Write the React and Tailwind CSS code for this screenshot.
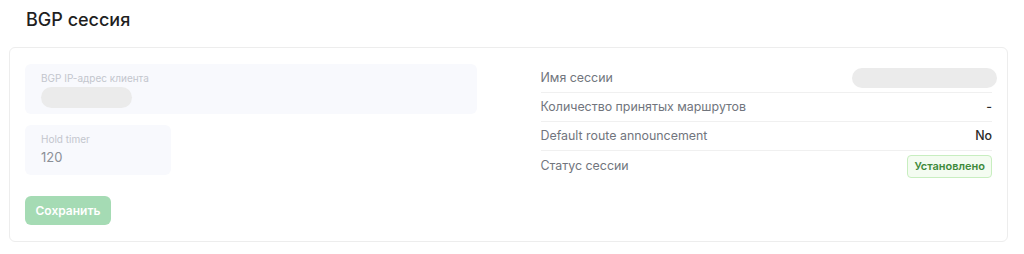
import React from "react";

const ROWS = [
  { label: "Имя сессии", value: "skeleton" },
  { label: "Количество принятых маршрутов", value: "-" },
  { label: "Default route announcement", value: "No" },
  { label: "Статус сессии", value: "badge" },
];

const Field = ({ label, children, className }) => (
  <div className={`rounded-md bg-[#f8f9fd] px-4 pt-[7px] ${className}`}>
    <div className="text-[10px] leading-[14px] text-[#c3c6cd]">{label}</div>
    {children}
  </div>
);

const App = () => {
  return (
    <div className="w-[1024px] h-[254px] bg-white font-['Inter','Liberation_Sans',sans-serif]">
      <h2 className="pl-[26px] pt-[9px] text-[18px] leading-[22px] font-medium text-[#1f1f1f]">
        BGP сессия
      </h2>

      <div className="mx-[9px] mt-[16px] w-[999px] rounded-md border border-[#ededed] px-[15px] pt-[16px] pb-[16px]">
        <div className="grid grid-cols-2 gap-16">
          <div className="flex flex-col">
            <Field label="BGP IP-адрес клиента" className="h-[50px]">
              <div className="mt-[2px] h-[21px] w-[91px] rounded-full bg-[#ebebeb]" />
            </Field>
            <Field label="Hold timer" className="mt-[11px] h-[50px] w-[146px]">
              <div className="mt-[3px] text-[13px] leading-[16px] text-[#8b8f97]">120</div>
            </Field>
            <button className="mt-[21px] h-[29px] w-[86px] rounded-md bg-[#a5dbb4] text-[12px] font-semibold text-white">
              Сохранить
            </button>
          </div>

          <div className="flex flex-col">
            {ROWS.map((row, i) => (
              <div
                key={row.label}
                className={`flex items-center justify-between ${
                  i < ROWS.length - 1 ? "h-[29px] border-b border-[#f0f0f0]" : "h-[30px]"
                }`}
              >
                <span className="text-[12.4px] text-[#71757d]">{row.label}</span>
                {row.value === "skeleton" ? (
                  <div className="h-[20px] w-[145px] rounded-full bg-[#ebebeb] -mr-[5px]" />
                ) : row.value === "badge" ? (
                  <span className="rounded border border-[#c8eec0] bg-[#f4fcf1] px-[6px] py-[3px] text-[11px] leading-[15px] font-semibold text-[#3f8a3c]">
                    Установлено
                  </span>
                ) : (
                  <span className="text-[12.4px] font-medium text-[#2a2a2a]">{row.value}</span>
                )}
              </div>
            ))}
          </div>
        </div>
      </div>
    </div>
  );
};

export default App;
